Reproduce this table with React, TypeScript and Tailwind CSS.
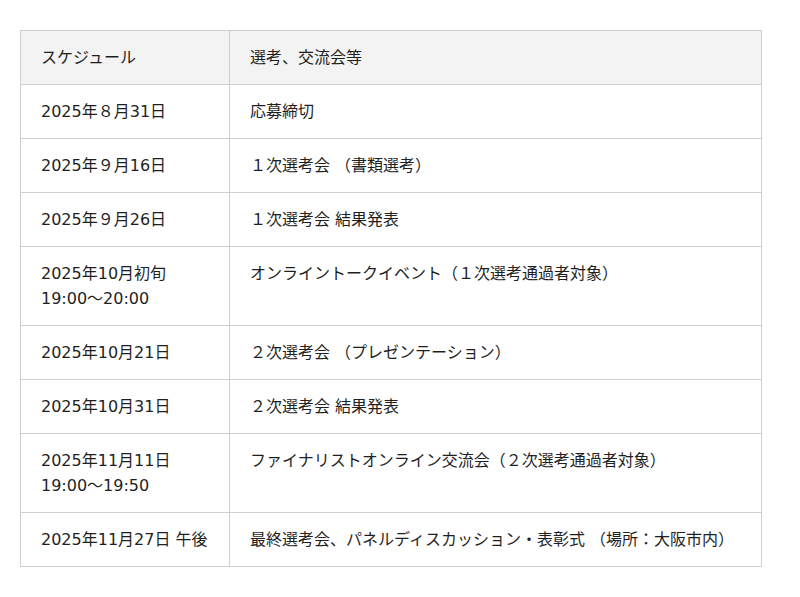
import React from "react";

const rows: { date: string[]; event: string }[] = [
  { date: ["2025年８月31日"], event: "応募締切" },
  { date: ["2025年９月16日"], event: "１次選考会 （書類選考）" },
  { date: ["2025年９月26日"], event: "１次選考会 結果発表" },
  { date: ["2025年10月初旬", "19:00～20:00"], event: "オンライントークイベント（１次選考通過者対象）" },
  { date: ["2025年10月21日"], event: "２次選考会 （プレゼンテーション）" },
  { date: ["2025年10月31日"], event: "２次選考会 結果発表" },
  { date: ["2025年11月11日", "19:00～19:50"], event: "ファイナリストオンライン交流会（２次選考通過者対象）" },
  { date: ["2025年11月27日 午後"], event: "最終選考会、パネルディスカッション・表彰式 （場所：大阪市内）" },
];

const App = () => {
  return (
    <div
      className="min-h-[597px] bg-white pt-[30px] pl-[20px] text-[16px] leading-[25px] text-[#1f1f1f]"
      style={{ fontFamily: '"DejaVu Sans", "Noto Sans CJK JP", sans-serif' }}
    >
      <table className="w-[742px] border-collapse">
        <thead>
          <tr className="bg-[#f3f3f3]">
            <th className="w-[209px] border border-[#cfcfcf] px-[20px] py-[14px] text-left align-top font-normal">
              スケジュール
            </th>
            <th className="border border-[#cfcfcf] px-[20px] py-[14px] text-left align-top font-normal">
              選考、交流会等
            </th>
          </tr>
        </thead>
        <tbody>
          {rows.map((row, i) => (
            <tr key={i}>
              <td className="border border-[#cfcfcf] px-[20px] py-[14px] align-top">
                {row.date.map((line, j) => (
                  <div key={j}>{line}</div>
                ))}
              </td>
              <td className="border border-[#cfcfcf] px-[20px] py-[14px] align-top">{row.event}</td>
            </tr>
          ))}
        </tbody>
      </table>
    </div>
  );
};

export default App;
